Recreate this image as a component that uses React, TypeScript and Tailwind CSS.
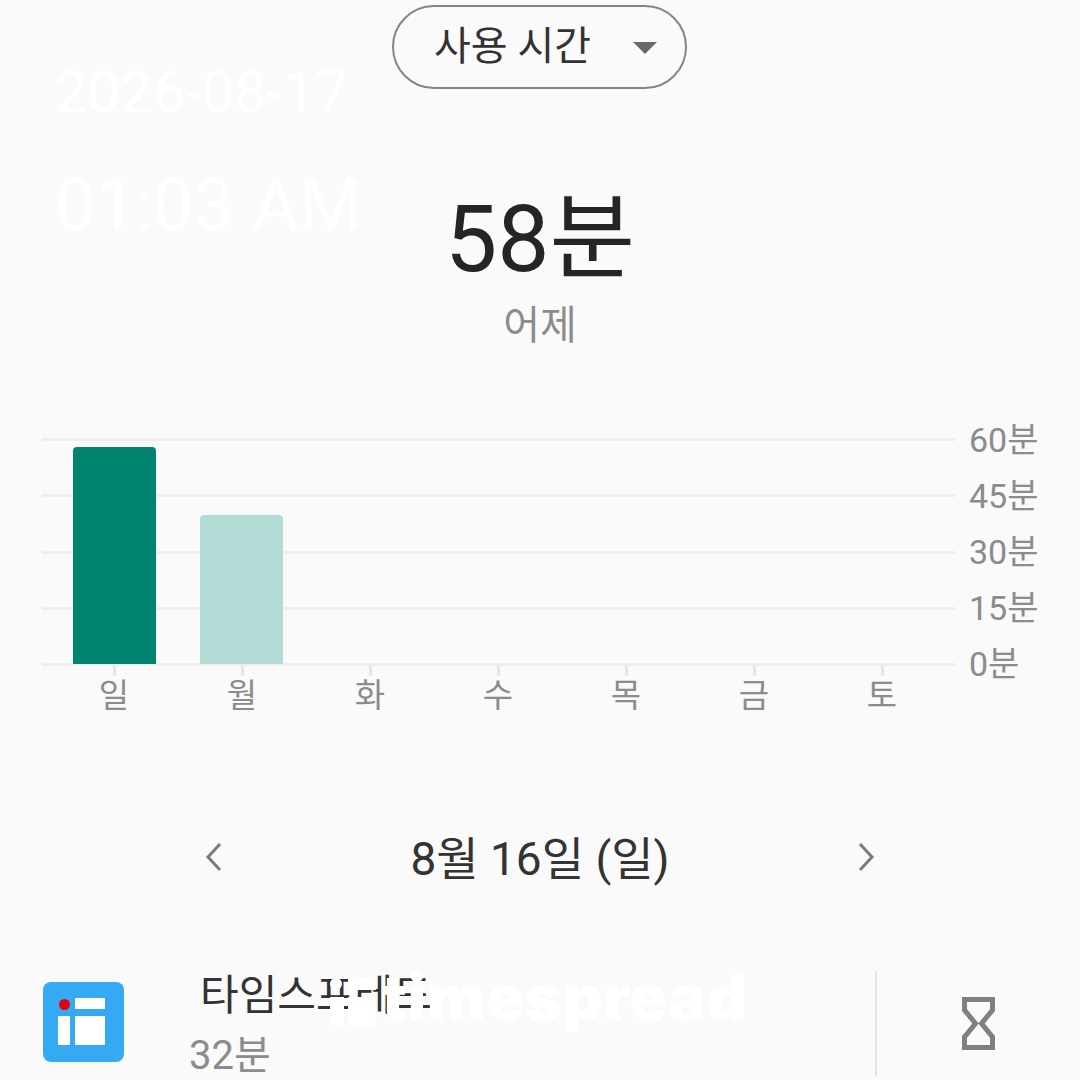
const days = ["일", "월", "화", "수", "목", "금", "토"];
const gridLabels = ["60분", "45분", "30분", "15분", "0분"];
const bars = [
  { day: "일", height: "h-[217px]", color: "bg-[#00846f]" },
  { day: "월", height: "h-[149px]", color: "bg-[#b2dbd5]" },
];

function Chart() {
  return (
    <div className="mt-[87px] flex w-full pl-[42px]">
      <div className="relative h-[228px] w-[913px]">
        <div className="flex h-full flex-col justify-between">
          {gridLabels.map((label) => (
            <div key={label} className="h-[3px] w-full bg-[#eeeeee]" />
          ))}
        </div>
        <div className="absolute bottom-[2px] left-[9px] flex h-[217px] items-end">
          {bars.map((bar) => (
            <div key={bar.day} className="flex w-[127px] justify-center">
              <div className={`w-[83px] rounded-t-[4px] ${bar.color} ${bar.height}`} />
            </div>
          ))}
        </div>
      </div>
      <div className="-my-[17px] ml-[14px] flex h-[262px] flex-col justify-between text-[34px] leading-[38px] text-[#8c8c8c]">
        {gridLabels.map((label) => (
          <span key={label}>{label}</span>
        ))}
      </div>
    </div>
  );
}

function DayAxis() {
  return (
    <div className="flex w-[896px] ml-[50px]">
      {days.map((day) => (
        <div key={day} className="flex w-[128px] flex-col items-center">
          <div className="h-[10px] w-[3px] bg-[#e6e6e6]" />
          <span className="-mt-px text-[33px] leading-[42px] text-[#8c8c8c]">{day}</span>
        </div>
      ))}
    </div>
  );
}

function Hourglass() {
  return (
    <svg width="33" height="53" viewBox="0 0 33 53" fill="none" stroke="#808080" strokeWidth="5">
      <path d="M2.5 2.5H30.5V13L19.5 26.5L30.5 40V50.5H2.5V40L13.5 26.5L2.5 13Z" strokeLinejoin="miter" />
    </svg>
  );
}

function AppIcon() {
  return (
    <div className="relative h-[80px] w-[81px] shrink-0 rounded-[8px] bg-[#35a9f2]">
      <div className="absolute left-[16px] top-[17px] size-[11px] rounded-full bg-[#e8000c]" />
      <div className="absolute left-[32px] top-[16px] h-[11px] w-[30px] bg-white" />
      <div className="absolute left-[15px] top-[34px] h-[29px] w-[12px] bg-white" />
      <div className="absolute left-[32px] top-[34px] h-[29px] w-[30px] bg-white" />
    </div>
  );
}

export default function App() {
  return (
    <div
      className="relative h-[1080px] w-[1080px] overflow-hidden bg-[#fafafa]"
      style={{ fontFamily: 'Roboto, "Noto Sans CJK KR", sans-serif' }}
    >
      <div className="flex flex-col">
        <div className="flex justify-center pt-[5px]">
          <div className="-ml-px flex h-[84px] w-[295px] items-center rounded-full border-2 border-[#858585] pl-[40px]">
            <span className="text-[40px] leading-none text-[#333333]">사용 시간</span>
            <div className="ml-[42px] mt-[1px] h-0 w-0 border-x-[12px] border-t-[12px] border-x-transparent border-t-[#666a6c]" />
          </div>
        </div>

        <div className="mt-[96px] text-center text-[93px] leading-[110px] text-[#252525]">58분</div>
        <div className="mt-[6px] text-center text-[40px] leading-[50px] text-[#8c8c8c]">어제</div>

        <Chart />
        <DayAxis />

        <div className="mt-[112px] flex h-[60px] items-center justify-center">
          <svg className="-mt-[5px]" width="20" height="30" viewBox="0 0 20 30" fill="none" stroke="#7c7c7c" strokeWidth="3">
            <path d="M16 2L4 15L16 28" />
          </svg>
          <div className="w-[632px] text-center text-[46px] leading-[60px] text-[#333333]">8월 16일 (일)</div>
          <svg className="-mt-[5px]" width="20" height="30" viewBox="0 0 20 30" fill="none" stroke="#7c7c7c" strokeWidth="3">
            <path d="M4 2L16 15L4 28" />
          </svg>
        </div>

        <div className="mt-[82px] flex h-[110px] items-start pl-[43px]">
          <div className="mt-[11px]">
            <AppIcon />
          </div>
          <div className="ml-[65px] w-[686px]">
            <div className="pl-[11px] text-[42px] leading-[50px] text-[#333333]">타임스프레드</div>
            <div className="mt-[11px] text-[40px] leading-[48px] text-[#8c8c8c]">32분</div>
          </div>
          <div className="h-[105px] w-[2px] bg-[#dfe4e6]" />
          <div className="ml-[85px] mt-[26px]">
            <Hourglass />
          </div>
        </div>
      </div>

      {/* capture watermarks sit on top of the screen */}
      <div className="absolute left-[55px] top-[62px] text-[58px] leading-[60px] text-white">2026-08-17</div>
      <div className="absolute left-[55px] top-[166px] text-[72px] leading-[80px] text-white">01:03 AM</div>
      <div className="absolute left-[330px] top-[968px] flex items-center gap-[6px] text-white">
        <div className="mt-[6px] flex h-[47px] w-[46px] flex-wrap content-between justify-between">
          <div className="size-[12px] rounded-full bg-white" />
          <div className="h-[12px] w-[28px] bg-white" />
          <div className="h-[28px] w-[14px] bg-white" />
          <div className="h-[28px] w-[28px] bg-white" />
        </div>
        <span className="text-[62px] font-black leading-[60px] tracking-[1px]" style={{ fontFamily: "Inter, sans-serif" }}>
          timespread
        </span>
      </div>
    </div>
  );
}
